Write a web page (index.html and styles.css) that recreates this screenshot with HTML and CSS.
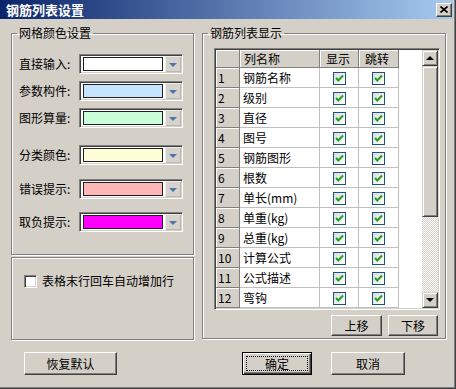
FILE: index.html
```html
<!DOCTYPE html>
<html lang="zh-CN">
<head>
    <meta charset="UTF-8">
    <meta name="viewport" content="width=device-width, initial-scale=1.0">
    <title>钢筋列表设置</title>
    <link rel="stylesheet" href="styles.css">
</head>
<body>
<div class="window">
    <div class="titlebar">
        <span class="title">钢筋列表设置</span>
        <span class="close">
            <svg width="8" height="7" viewBox="0 0 8 7"><path d="M0.5 0.5 L7.5 6.5 M7.5 0.5 L0.5 6.5" stroke="#000" stroke-width="1.7" fill="none"/></svg>
        </span>
    </div>

    <div class="content">
        <div class="columns">
            <div class="leftcol">
                <fieldset class="group colors">
                    <legend>网格颜色设置</legend>
                    <div class="colorrow">
                        <span class="lbl">直接输入:</span>
                        <span class="combo"><span class="swatch c-white"></span><span class="drop"></span></span>
                    </div>
                    <div class="colorrow gap-s">
                        <span class="lbl">参数构件:</span>
                        <span class="combo"><span class="swatch c-blue"></span><span class="drop"></span></span>
                    </div>
                    <div class="colorrow gap-s">
                        <span class="lbl">图形算量:</span>
                        <span class="combo"><span class="swatch c-green"></span><span class="drop"></span></span>
                    </div>
                    <div class="colorrow gap-l">
                        <span class="lbl">分类颜色:</span>
                        <span class="combo"><span class="swatch c-yellow"></span><span class="drop"></span></span>
                    </div>
                    <div class="colorrow gap-m">
                        <span class="lbl">错误提示:</span>
                        <span class="combo"><span class="swatch c-pink"></span><span class="drop"></span></span>
                    </div>
                    <div class="colorrow gap-m2">
                        <span class="lbl">取负提示:</span>
                        <span class="combo"><span class="swatch c-magenta"></span><span class="drop"></span></span>
                    </div>
                </fieldset>

                <div class="group option">
                    <label class="checkline"><span class="checkbox"></span>表格末行回车自动增加行</label>
                </div>
            </div>

            <fieldset class="group list">
                <legend>钢筋列表显示</legend>
                <div class="gridbox">
                    <div class="gridarea">
                        <table class="grid">
                            <thead>
                                <tr>
                                    <th class="num"></th>
                                    <th class="hname">列名称</th>
                                    <th class="hshow">显示</th>
                                    <th class="hjump">跳转</th>
                                </tr>
                            </thead>
                            <tbody id="rows"></tbody>
                        </table>
                    </div>
                    <div class="vscroll">
                        <span class="sbtn up"></span>
                        <span class="thumb"></span>
                        <span class="track"></span>
                        <span class="sbtn down"></span>
                    </div>
                </div>
                <div class="movebtns">
                    <button class="btn move up-btn">上移</button>
                    <button class="btn move">下移</button>
                </div>
            </fieldset>
        </div>

        <div class="footer">
            <button class="btn reset">恢复默认</button>
            <button class="btn ok"><span class="focus">确定</span></button>
            <button class="btn cancel">取消</button>
        </div>
    </div>
</div>

<script>
    let columns = ["钢筋名称", "级别", "直径", "图号", "钢筋图形", "根数",
        "单长(mm)", "单重(kg)", "总重(kg)", "计算公式", "公式描述", "弯钩"];

    let tick = '<span class="tick"><svg width="11" height="11" viewBox="0 0 11 11">' +
        '<path d="M2 5 L4.3 7.5 L9 2.5" stroke="#21a121" stroke-width="2" fill="none"/></svg></span>';

    function renderRows() {
        let body = document.getElementById("rows");
        body.innerHTML = "";
        columns.forEach((name, i) => {
            let row = document.createElement("tr");
            row.innerHTML = '<th class="num">' + (i + 1) + '</th>' +
                '<td class="name">' + name + '</td>' +
                '<td class="chk">' + tick + '</td>' +
                '<td class="chk">' + tick + '</td>';
            body.appendChild(row);
        });
    }

    renderRows();
</script>
</body>
</html>
```

FILE: styles.css
```css
* { box-sizing: border-box; }

body {
    margin: 0;
    background: #d4d0c8;
    font-family: "Noto Sans CJK SC", "Noto Sans", sans-serif;
    font-size: 12px;
    line-height: 14px;
    color: #000;
}

.window {
    width: 456px;
    height: 389px;
    background: #d4d0c8;
    border-right: 1px solid #404040;
    border-bottom: 1px solid #404040;
    box-shadow: inset -1px -1px 0 #808080;
}

/* title bar */
.titlebar {
    width: 453px;
    height: 19px;
    display: flex;
    align-items: center;
    justify-content: space-between;
    padding: 0 1px 0 6px;
    background: linear-gradient(to right, #0a246a, #a6caf0);
}
.title {
    color: #fff;
    font-weight: bold;
    font-size: 13px;
    line-height: 15px;
}
.close {
    width: 16px;
    height: 14px;
    display: flex;
    align-items: center;
    justify-content: center;
    background: #d4d0c8;
    border-top: 1px solid #fff;
    border-left: 1px solid #fff;
    border-right: 1px solid #404040;
    border-bottom: 1px solid #404040;
    box-shadow: inset -1px -1px 0 #808080;
}

.content {
    padding: 7px 0 0 11px;
}
.columns {
    display: flex;
    gap: 8px;
}
.leftcol {
    width: 183px;
    display: flex;
    flex-direction: column;
    gap: 2px;
}

/* etched group boxes */
.group {
    margin: 0;
    border: 1px solid #808080;
    box-shadow: inset 1px 1px 0 #fff, 1px 1px 0 #fff;
}
fieldset.group {
    min-width: 0;
}
legend {
    padding: 0 2px;
    line-height: 14px;
}

/* colour settings */
fieldset.colors {
    height: 229px;
    padding: 14px 0 0 7px;
}
.colors legend { margin-left: -2px; }
.colorrow {
    display: flex;
    align-items: center;
    height: 20px;
}
.gap-s { margin-top: 7px; }
.gap-l { margin-top: 17px; }
.gap-m { margin-top: 14px; }
.gap-m2 { margin-top: 13px; }
.lbl {
    width: 60px;
}
.combo {
    width: 104px;
    height: 20px;
    display: flex;
    align-items: center;
    padding: 1px 1px 1px 3px;
    background: #fff;
    border-top: 1px solid #808080;
    border-left: 1px solid #808080;
    border-right: 1px solid #fff;
    border-bottom: 1px solid #fff;
    box-shadow: inset 1px 1px 0 #404040, inset -1px -1px 0 #d4d0c8;
}
.swatch {
    width: 80px;
    height: 14px;
    margin-right: auto;
    border: 1px solid #202020;
}
.c-white { background: #fff; }
.c-blue { background: #c4e4ff; }
.c-green { background: #c8ffd8; }
.c-yellow { background: #fffcd8; }
.c-pink { background: #ffb6b6; }
.c-magenta { background: #ff00ff; }
.drop {
    width: 16px;
    height: 16px;
    display: flex;
    align-items: center;
    justify-content: center;
    background: #d6d3cc;
    box-shadow: inset 1px 1px 0 #eeece8, inset -1px -1px 0 #bcb8b0;
}
.drop::after {
    content: "";
    border-left: 4px solid transparent;
    border-right: 4px solid transparent;
    border-top: 4px solid #5273aa;
    margin-top: 1px;
}

/* option box */
.option {
    height: 83px;
    padding: 16px 0 0 12px;
}
.checkline {
    display: flex;
    align-items: center;
    gap: 5px;
}
.checkbox {
    width: 13px;
    height: 13px;
    background: #fff;
    border-top: 1px solid #808080;
    border-left: 1px solid #808080;
    border-right: 1px solid #fff;
    border-bottom: 1px solid #fff;
    box-shadow: inset 1px 1px 0 #404040, inset -1px -1px 0 #d4d0c8;
}

/* list group */
fieldset.list {
    width: 244px;
    height: 313px;
    padding: 8px 0 0 11px;
}
.list legend { margin-left: -6px; }
.gridbox {
    width: 226px;
    height: 262px;
    display: flex;
    padding: 1px;
    border-top: 1px solid #808080;
    border-left: 1px solid #808080;
    border-right: 1px solid #fff;
    border-bottom: 1px solid #fff;
    box-shadow: inset 1px 1px 0 #404040, inset -1px -1px 0 #d4d0c8;
}
.gridarea {
    flex: 1;
    background: #fff;
}
.grid {
    width: 183px;
    table-layout: fixed;
    border-collapse: separate;
    border-spacing: 0;
}
.grid th {
    padding: 0;
    font-weight: normal;
    text-align: left;
    background: #d4d0c8;
    border-right: 1px solid #808080;
    border-bottom: 1px solid #808080;
    box-shadow: inset 1px 1px 0 #fff;
}
.grid thead th { height: 18px; }
.grid th.num { width: 24px; padding-left: 2px; }
.grid th.hname { width: 80px; padding-left: 4px; }
.grid th.hshow { width: 39px; padding-left: 6px; }
.grid th.hjump { width: 40px; padding-left: 6px; }
.grid tbody th,
.grid td {
    height: 20px;
}
.grid td {
    padding: 0;
    border-right: 1px solid #c0c0c0;
    border-bottom: 1px solid #c0c0c0;
}
.grid td.name {
    padding-left: 3px;
    white-space: nowrap;
}
.grid td.chk {
    text-align: center;
}
.tick {
    display: inline-flex;
    width: 13px;
    height: 13px;
    vertical-align: middle;
    border: 1px solid #1c5180;
    background: linear-gradient(135deg, #dcdcd7, #fff);
}

/* scrollbar */
.vscroll {
    width: 16px;
    display: flex;
    flex-direction: column;
}
.sbtn,
.thumb {
    background: #d4d0c8;
    border-top: 1px solid #d4d0c8;
    border-left: 1px solid #d4d0c8;
    border-right: 1px solid #404040;
    border-bottom: 1px solid #404040;
    box-shadow: inset 1px 1px 0 #fff, inset -1px -1px 0 #808080;
}
.sbtn {
    height: 16px;
    display: flex;
    align-items: center;
    justify-content: center;
}
.sbtn::after {
    content: "";
    border-left: 4px solid transparent;
    border-right: 4px solid transparent;
}
.sbtn.up::after { border-bottom: 4px solid #000; }
.sbtn.down::after { border-top: 4px solid #000; }
.thumb {
    height: 151px;
}
.track {
    flex: 1;
    background: repeating-conic-gradient(#fff 0 25%, #d4d0c8 0 50%) 0 0 / 2px 2px;
}

/* buttons */
.btn {
    height: 23px;
    padding: 0;
    font: inherit;
    color: #000;
    background: #d4d0c8;
    border-top: 1px solid #fff;
    border-left: 1px solid #fff;
    border-right: 1px solid #404040;
    border-bottom: 1px solid #404040;
    box-shadow: inset -1px -1px 0 #808080;
}
.movebtns {
    width: 224px;
    display: flex;
    justify-content: flex-end;
    gap: 6px;
    margin-top: 5px;
}
.move {
    width: 50px;
    height: 21px;
}
.up-btn { width: 51px; }

.footer {
    display: flex;
    margin-top: 12px;
    padding-left: 13px;
}
.reset { width: 93px; }
.ok {
    width: 70px;
    margin-left: 125px;
    border: 1px solid #000;
    box-shadow: inset 1px 1px 0 #fff, inset -1px -1px 0 #404040, inset -2px -2px 0 #808080;
}
.focus {
    display: block;
    margin: 3px;
    height: 15px;
    line-height: 13px;
    border: 1px dotted #000;
}
.cancel {
    width: 74px;
    margin-left: 19px;
}
```
